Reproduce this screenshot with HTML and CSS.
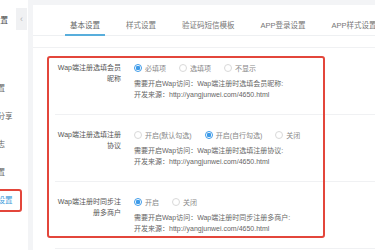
FILE: index.html
```html
<!DOCTYPE html>
<html lang="zh-CN">

<head>
    <meta charset="UTF-8">
    <meta name="viewport" content="width=device-width, initial-scale=1.0">
    <title>Wap端设置</title>
    <link rel="stylesheet" href="styles.css">
</head>

<body>
    <div class="page">
        <aside class="sidebar">
            <div class="sidebar-head">
                <span class="sidebar-title">系统设置</span>
                <span class="collapse-btn">&lsaquo;</span>
            </div>
            <ul class="menu">
                <li>基础设置</li>
                <li>推广员分享</li>
                <li>操作日志</li>
                <li>短信设置</li>
                <li class="active">移动端设置</li>
            </ul>
        </aside>

        <main class="main">
            <div class="card">
                <nav class="tabs">
                    <span class="tab active">基本设置</span>
                    <span class="tab">样式设置</span>
                    <span class="tab">验证码短信模板</span>
                    <span class="tab">APP登录设置</span>
                    <span class="tab">APP样式设置</span>
                </nav>

                <div class="form">
                    <div class="form-row">
                        <div class="form-label">Wap端注册选填会员昵称</div>
                        <div class="form-field">
                            <div class="radio-group">
                                <label class="radio checked"><i></i>必填项</label>
                                <label class="radio"><i></i>选填项</label>
                                <label class="radio"><i></i>不显示</label>
                            </div>
                            <p class="help">需要开启Wap访问：Wap端注册时选填会员昵称:<br>开发来源：http://yangjunwei.com/4650.html</p>
                        </div>
                    </div>

                    <div class="form-row">
                        <div class="form-label">Wap端注册选填注册协议</div>
                        <div class="form-field">
                            <div class="radio-group">
                                <label class="radio"><i></i>开启(默认勾选)</label>
                                <label class="radio checked"><i></i>开启(自行勾选)</label>
                                <label class="radio"><i></i>关闭</label>
                            </div>
                            <p class="help">需要开启Wap访问：Wap端注册时选填注册协议:<br>开发来源：http://yangjunwei.com/4650.html</p>
                        </div>
                    </div>

                    <div class="form-row">
                        <div class="form-label">Wap端注册时同步注册多商户</div>
                        <div class="form-field">
                            <div class="radio-group">
                                <label class="radio checked"><i></i>开启</label>
                                <label class="radio"><i></i>关闭</label>
                            </div>
                            <p class="help">需要开启Wap访问：Wap端注册时同步注册多商户:<br>开发来源：http://yangjunwei.com/4650.html</p>
                        </div>
                    </div>
                </div>

                <!-- annotation box -->
                <div class="highlight"></div>
            </div>
        </main>
    </div>
</body>

</html>
```

FILE: styles.css
```css
* {
    margin: 0;
    padding: 0;
    box-sizing: border-box;
}

html,
body {
    height: 100%;
    overflow: hidden;
}

body {
    background-color: #f3f4f6;
    font-family: "Liberation Sans", "Noto Sans CJK SC", sans-serif;
    color: #555;
}

.page {
    display: flex;
    height: 250px;
}

/* sidebar */
.sidebar {
    width: 28px;
    flex-shrink: 0;
    background: #fff;
    overflow: hidden;
}

.sidebar-head {
    display: flex;
    align-items: center;
    height: 22px;
    margin-top: 8px;
}

.sidebar-title {
    margin-left: -22px;
    font-size: 7.5px;
    white-space: nowrap;
    color: #444;
}

.collapse-btn {
    margin-left: auto;
    margin-right: 1px;
    width: 11px;
    height: 22px;
    flex-shrink: 0;
    background: #f0f1f3;
    color: #b5b5b5;
    font-size: 9px;
    line-height: 22px;
    text-align: center;
}

.menu {
    list-style: none;
    margin-top: 47px;
}

.menu li {
    margin-left: -27px;
    margin-right: 6px;
    height: 23px;
    margin-bottom: 5px;
    border: 2px solid transparent;
    border-radius: 3px;
    font-size: 7.5px;
    line-height: 19px;
    white-space: nowrap;
    color: #666;
}

.menu li.active {
    border-color: #e3463b;
    color: #3a9ad9;
}

/* main */
.main {
    flex: 1;
    padding: 5px 0 0 5px;
    min-width: 0;
}

.card {
    position: relative;
    height: 100%;
    background: #fff;
}

.tabs {
    display: flex;
    height: 31px;
    padding-left: 32px;
    border-bottom: 1px solid #eef0f2;
}

.tab {
    height: 31px;
    padding: 15px 5px 0;
    margin-right: 16px;
    border-bottom: 2px solid transparent;
    font-size: 7.5px;
    line-height: 12px;
    color: #777;
    white-space: nowrap;
}

.tab.active {
    border-bottom-color: #58aedc;
    color: #666;
}

/* form */
.form {
    margin-top: 11px;
    border-top: 1px solid #f0f1f3;
}

.form-row {
    display: flex;
    margin-left: 22px;
    padding: 12px 0 14px;
    border-bottom: 1px solid #f0f1f3;
}

.form-label {
    width: 66px;
    flex-shrink: 0;
    padding-top: 2px;
    font-size: 7px;
    line-height: 11px;
    text-align: right;
    color: #555;
}

.form-field {
    margin-left: 13px;
}

.radio-group {
    display: flex;
    align-items: center;
    gap: 13px;
    height: 16px;
}

.radio {
    display: flex;
    align-items: center;
    font-size: 7px;
    color: #888;
    white-space: nowrap;
}

.radio i {
    width: 8px;
    height: 8px;
    margin-right: 3px;
    border: 1px solid #d9d9d9;
    border-radius: 50%;
    background: #fff;
}

.radio.checked i {
    border-color: #3d9be9;
    background: radial-gradient(circle, #3d9be9 0, #3d9be9 2px, #fff 2.5px);
}

.help {
    margin-top: 2px;
    font-size: 7px;
    line-height: 11px;
    color: #666;
    white-space: nowrap;
}

.highlight {
    position: absolute;
    left: 14px;
    top: 51px;
    width: 278px;
    height: 182px;
    border: 2px solid #e3463b;
    border-radius: 3px;
    pointer-events: none;
}
```
